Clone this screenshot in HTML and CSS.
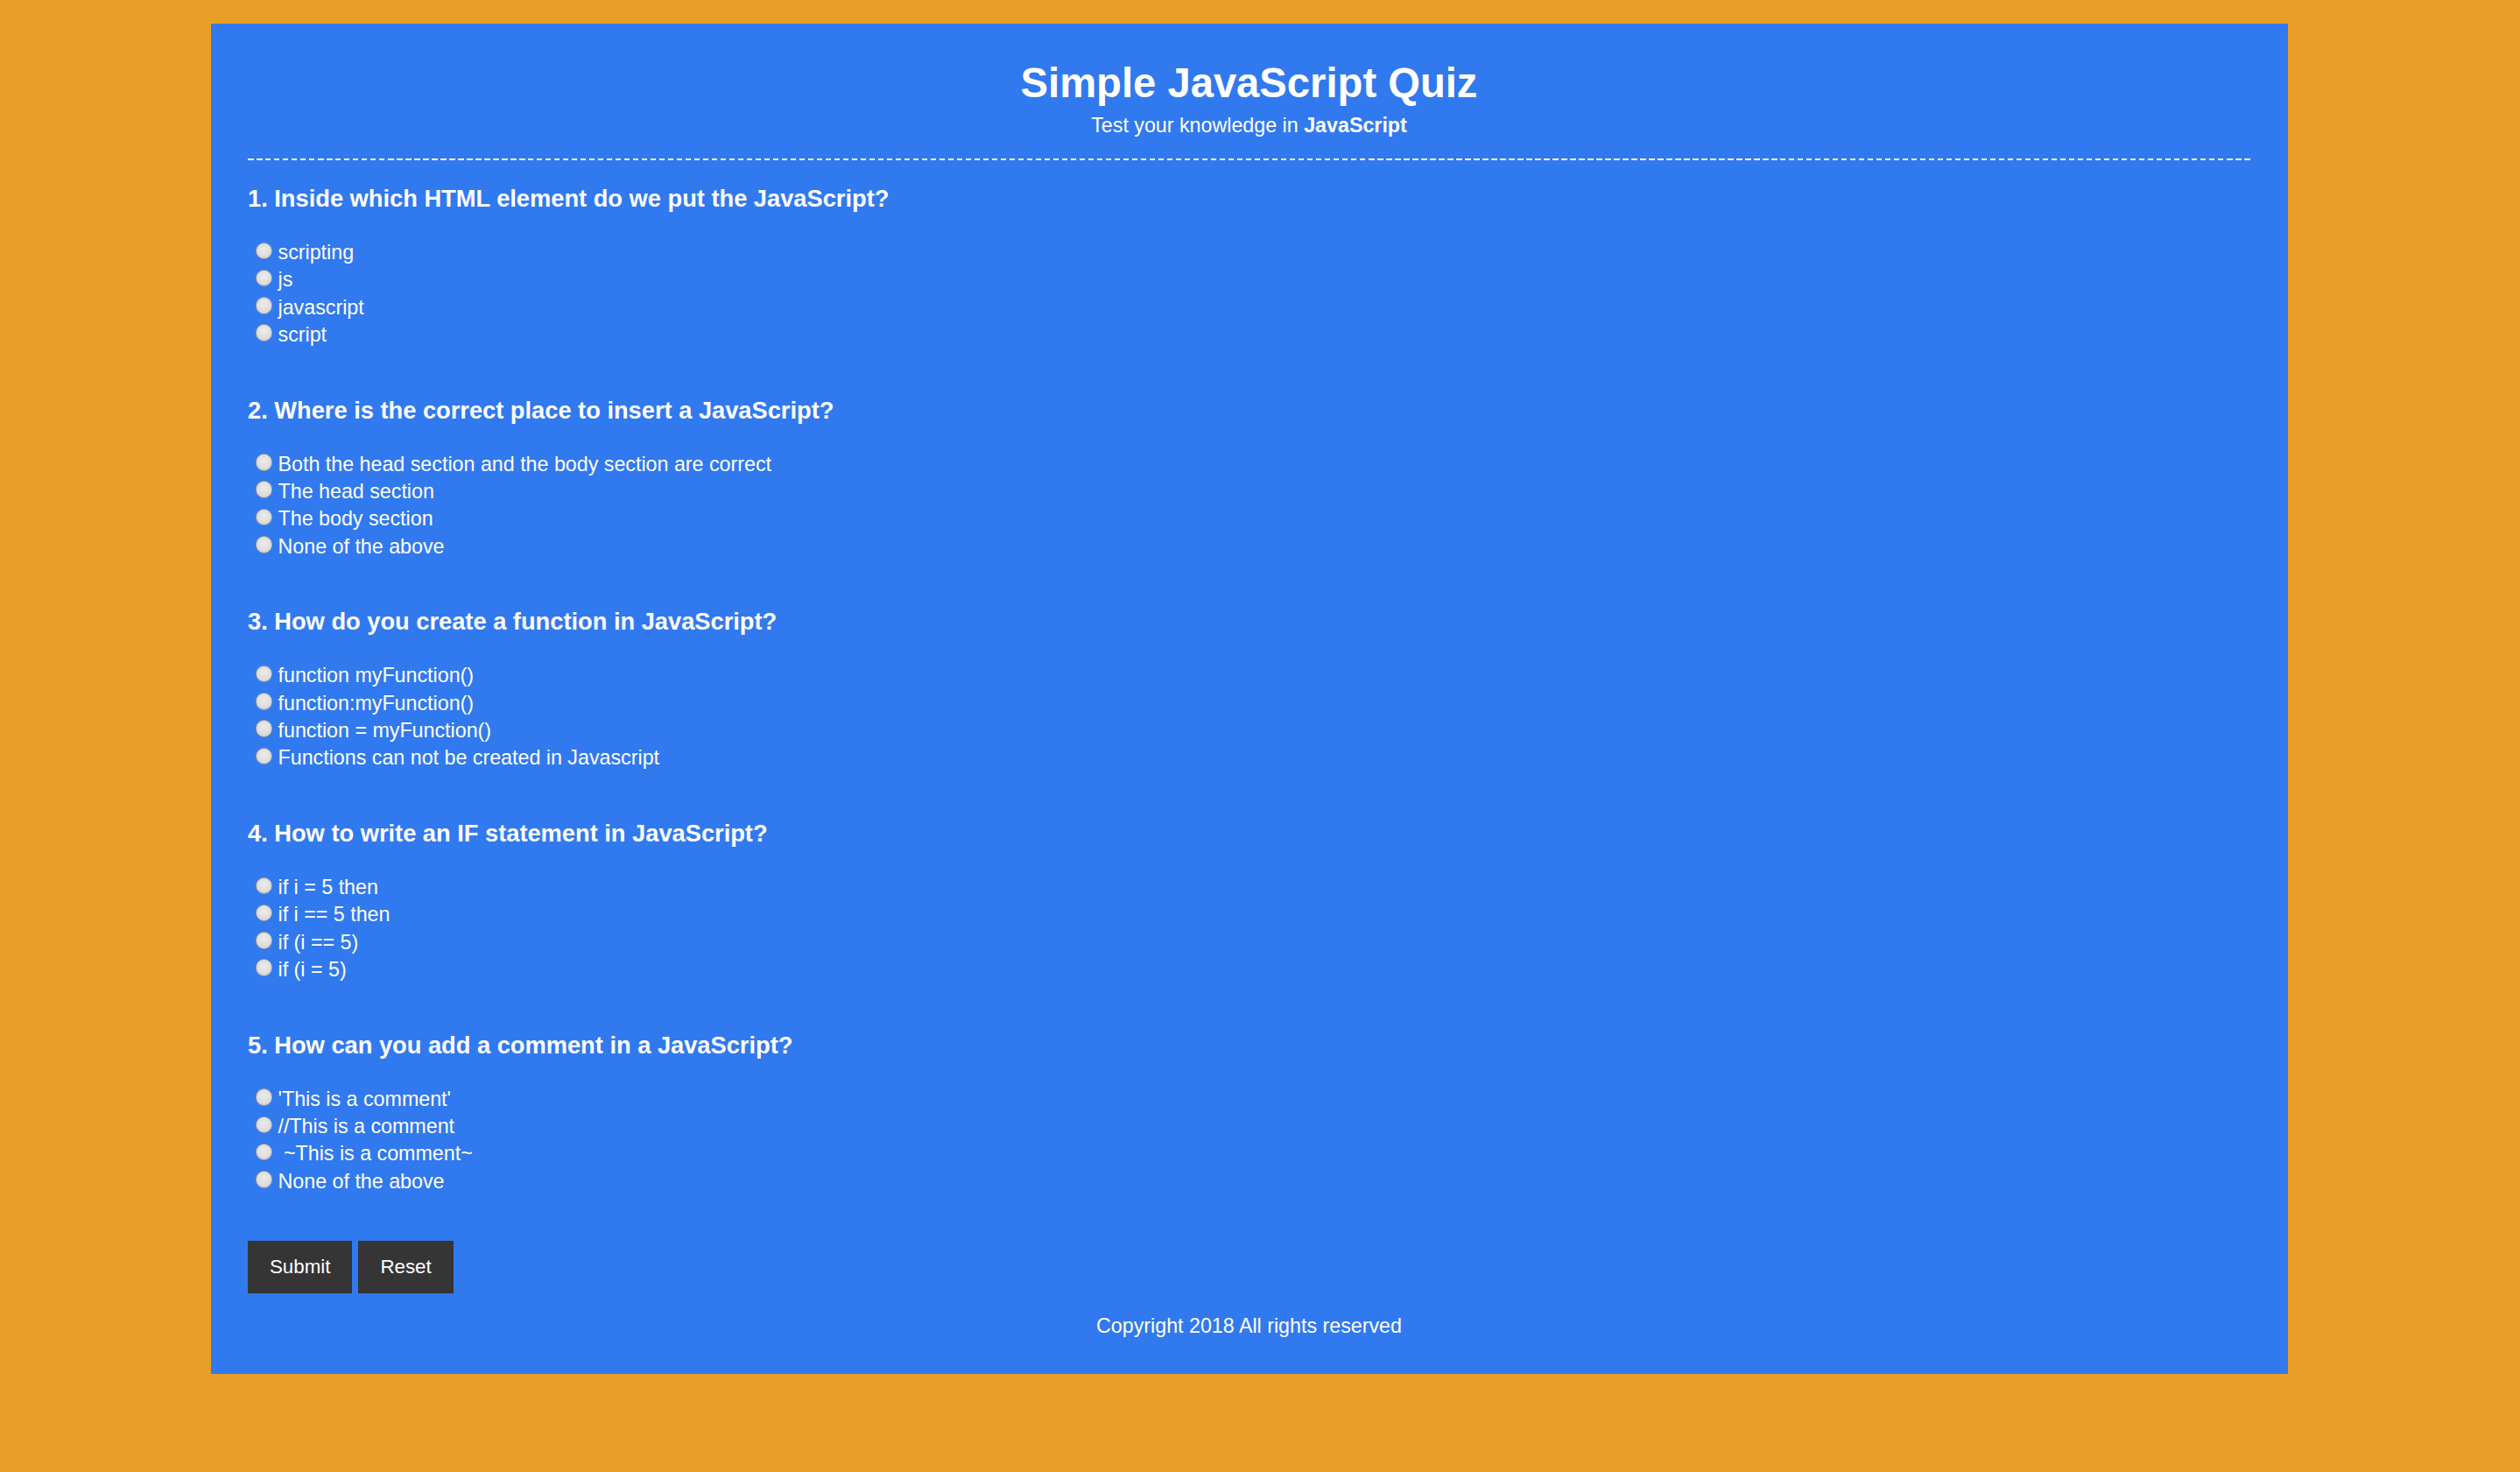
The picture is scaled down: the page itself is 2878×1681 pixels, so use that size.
FILE: index.html
```html
<!DOCTYPE html>
<html lang="en">
<head>
<meta charset="utf-8">
<title>Simple JavaScript Quiz</title>
<link rel="stylesheet" href="styles.css">
</head>
<body>
<main class="quiz">
  <header class="quiz-header">
    <h1 class="quiz-title">Simple JavaScript Quiz</h1>
    <p class="quiz-subtitle">Test your knowledge in <strong>JavaScript</strong></p>
  </header>
  <div class="divider"></div>
  <form class="quiz-form">
    <div class="questions">
      <section class="question">
        <h3 class="question-title">1. Inside which HTML element do we put the JavaScript?</h3>
        <label class="option"><input class="radio" type="radio" name="q1">scripting</label>
        <label class="option"><input class="radio" type="radio" name="q1">js</label>
        <label class="option"><input class="radio" type="radio" name="q1">javascript</label>
        <label class="option"><input class="radio" type="radio" name="q1">script</label>
      </section>
      <section class="question">
        <h3 class="question-title">2. Where is the correct place to insert a JavaScript?</h3>
        <label class="option"><input class="radio" type="radio" name="q2">Both the head section and the body section are correct</label>
        <label class="option"><input class="radio" type="radio" name="q2">The head section</label>
        <label class="option"><input class="radio" type="radio" name="q2">The body section</label>
        <label class="option"><input class="radio" type="radio" name="q2">None of the above</label>
      </section>
      <section class="question">
        <h3 class="question-title">3. How do you create a function in JavaScript?</h3>
        <label class="option"><input class="radio" type="radio" name="q3">function myFunction()</label>
        <label class="option"><input class="radio" type="radio" name="q3">function:myFunction()</label>
        <label class="option"><input class="radio" type="radio" name="q3">function = myFunction()</label>
        <label class="option"><input class="radio" type="radio" name="q3">Functions can not be created in Javascript</label>
      </section>
      <section class="question">
        <h3 class="question-title">4. How to write an IF statement in JavaScript?</h3>
        <label class="option"><input class="radio" type="radio" name="q4">if i = 5 then</label>
        <label class="option"><input class="radio" type="radio" name="q4">if i == 5 then</label>
        <label class="option"><input class="radio" type="radio" name="q4">if (i == 5)</label>
        <label class="option"><input class="radio" type="radio" name="q4">if (i = 5)</label>
      </section>
      <section class="question">
        <h3 class="question-title">5. How can you add a comment in a JavaScript?</h3>
        <label class="option"><input class="radio" type="radio" name="q5">'This is a comment'</label>
        <label class="option"><input class="radio" type="radio" name="q5">//This is a comment</label>
        <label class="option"><input class="radio" type="radio" name="q5">&nbsp;~This is a comment~</label>
        <label class="option"><input class="radio" type="radio" name="q5">None of the above</label>
      </section>
    </div>
    <div class="actions">
      <button class="btn" type="button">Submit</button>
      <button class="btn" type="reset">Reset</button>
    </div>
  </form>
  <footer class="quiz-footer">Copyright 2018 All rights reserved</footer>
</main>
</body>
</html>
```
FILE: styles.css
```css
html, body {
  margin: 0;
  padding: 0;
}

body {
  background: #e99e27;
  font-family: "Liberation Sans", Arial, sans-serif;
  color: #ffffff;
  min-height: 1681px;
}

.quiz {
  box-sizing: border-box;
  width: 2372px;
  margin: 27px 0 0 241px;
  padding: 41px 43px 41.5px 42px;
  background: #3179ee;
}

.quiz-title {
  margin: 0;
  font-size: 47.2px;
  line-height: 54px;
  font-weight: bold;
  text-align: center;
}

.quiz-subtitle {
  margin: 8px 0 0;
  font-size: 23.25px;
  line-height: 27px;
  text-align: center;
}

.divider {
  margin-top: 24px;
  height: 2px;
  background: repeating-linear-gradient(90deg, #ffffff 0 6.5px, transparent 6.5px 10px);
}

.quiz-form {
  margin: 0;
}

.questions {
  display: flex;
  flex-direction: column;
  gap: 54.5px;
  margin-top: 28px;
}

.question-title {
  margin: 0 0 31px;
  font-size: 27.25px;
  line-height: 31px;
  font-weight: bold;
}

.option {
  display: block;
  height: 31.3px;
  font-size: 23.25px;
  line-height: 31.3px;
  white-space: pre;
}

.radio {
  -webkit-appearance: none;
  appearance: none;
  box-sizing: border-box;
  display: inline-block;
  width: 19.5px;
  height: 19.5px;
  margin: 0 6.5px 0 8.5px;
  padding: 0;
  border-radius: 50%;
  border: 1px solid #a3a3a3;
  background: radial-gradient(circle at 50% 40%, #ececec 0%, #dddddd 60%, #c6c6c6 100%);
  vertical-align: baseline;
}

.actions {
  display: flex;
  gap: 7px;
  margin-top: 52.5px;
}

.btn {
  height: 60px;
  padding: 0 25px;
  border: 0;
  border-radius: 0;
  background: #353535;
  color: #ffffff;
  font-family: "Liberation Sans", Arial, sans-serif;
  font-size: 22.3px;
}

.quiz-footer {
  margin-top: 23.5px;
  font-size: 23.25px;
  line-height: 27px;
  text-align: center;
}
```
